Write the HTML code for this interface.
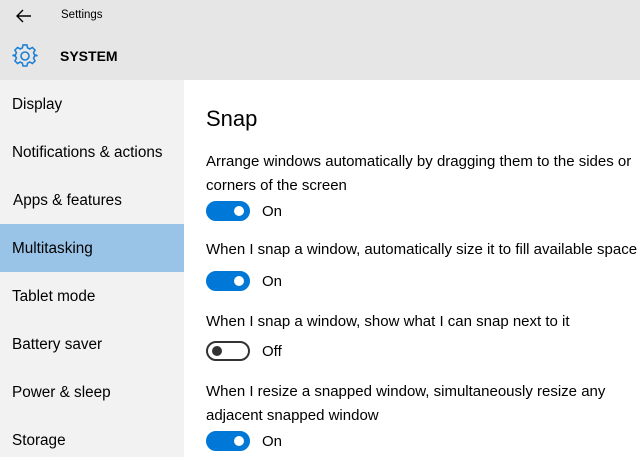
<!DOCTYPE html><html><head><style>
body{margin:0;width:640px;height:457px;overflow:hidden;font-family:"Liberation Sans",sans-serif;background:#fff;position:relative;color:#000}
.hdr{position:absolute;left:0;top:0;width:640px;height:80px;background:#e6e6e6}
.side{position:absolute;left:0;top:80px;width:184px;height:377px;background:#f2f2f2}
.it{position:absolute;left:12px;font-size:15.3px}
.sel{position:absolute;left:0;top:224px;width:184px;height:48px;background:#99c4e8}
.t{position:absolute;left:206px;font-size:15px;line-height:24px;white-space:nowrap}
.tg{position:absolute;left:206px;width:40px;height:16px;border-radius:10px;background:#0078d7;border:2px solid #0078d7}
.tg:after{content:"";position:absolute;right:4px;top:3px;width:10px;height:10px;border-radius:50%;background:#fff}
.off{background:#fff;border-color:#333}
.off:after{left:4px;right:auto;background:#333}
.lb{position:absolute;left:262px;font-size:15px}
</style></head><body>
<div class="hdr"></div>
<svg style="position:absolute;left:15px;top:8px" width="18" height="16" viewBox="0 0 18 16"><path d="M16 8H3M8 2L2 8l6 6" fill="none" stroke="#000" stroke-width="1.4"/></svg>
<div style="position:absolute;left:61px;top:9px;font-size:11.5px">Settings</div>
<svg style="position:absolute;left:12px;top:43px" width="26" height="26" viewBox="0 0 26 26"><g fill="none" stroke="#1a7fd6" stroke-width="1.6"><circle cx="13" cy="13" r="4"/><path d="M11 2h4l.7 3 2.3 1.2 2.7-1.6 2.8 2.8-1.6 2.7L23 12.4l3 .6v0l-3 .6-1.1 2.3 1.6 2.7-2.8 2.8-2.7-1.6-2.3 1.2-.7 3h-4l-.7-3-2.3-1.2-2.7 1.6-2.8-2.8 1.6-2.7L3 13.6 0 13l3-.6 1.1-2.3-1.6-2.7 2.8-2.8 2.7 1.6L10.3 5z" transform="translate(0.5 0) scale(0.96)"/></g></svg>
<div style="position:absolute;left:60px;top:48px;font-size:14px;font-weight:bold">SYSTEM</div>
<div class="side"></div><div class="sel"></div>
<div class="it" style="top:96px">Display</div>
<div class="it" style="top:144px">Notifications &amp; actions</div>
<div class="it" style="top:192px;left:13px">Apps &amp; features</div>
<div class="it" style="top:240px">Multitasking</div>
<div class="it" style="top:288px">Tablet mode</div>
<div class="it" style="top:336px">Battery saver</div>
<div class="it" style="top:384px">Power &amp; sleep</div>
<div class="it" style="top:432px">Storage</div>
<div style="position:absolute;left:206px;top:106px;font-size:22px">Snap</div>
<div class="t" style="top:150px">Arrange windows automatically by dragging them to the sides or<br>corners of the screen</div>
<div class="tg" style="top:201px"></div><div class="lb" style="top:203px">On</div>
<div class="t" style="top:238px">When I snap a window, automatically size it to fill available space</div>
<div class="tg" style="top:271px"></div><div class="lb" style="top:273px">On</div>
<div class="t" style="top:310px">When I snap a window, show what I can snap next to it</div>
<div class="tg off" style="top:341px"></div><div class="lb" style="top:343px">Off</div>
<div class="t" style="top:380px">When I resize a snapped window, simultaneously resize any<br>adjacent snapped window</div>
<div class="tg" style="top:431px"></div><div class="lb" style="top:433px">On</div>
</body></html>
